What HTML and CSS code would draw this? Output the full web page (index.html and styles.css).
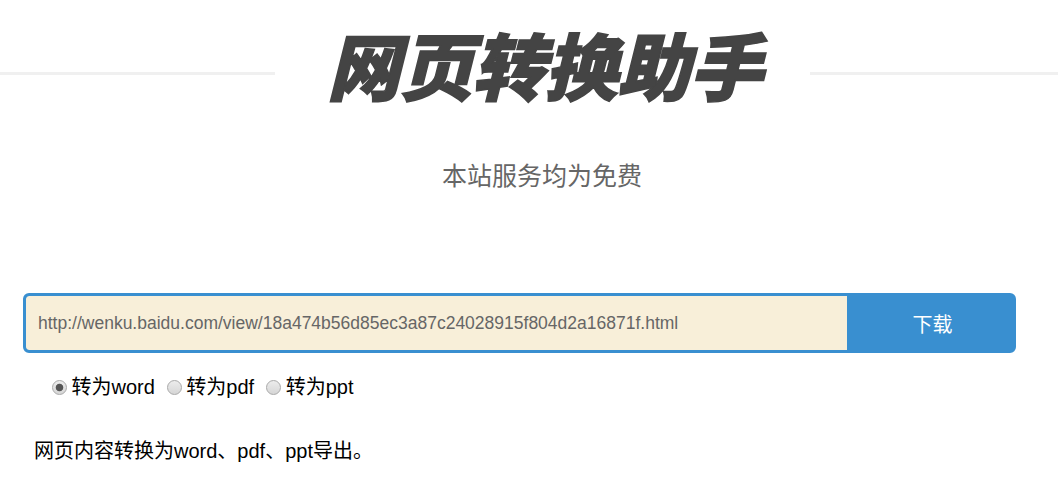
FILE: index.html
```html
<!DOCTYPE html>
<html lang="zh-CN">
<head>
<meta charset="utf-8">
<title>网页转换助手</title>
<link rel="stylesheet" href="styles.css">
</head>
<body>
<header class="masthead">
  <span class="rule rule-left"></span>
  <h1 class="title">网页转换助手</h1>
  <span class="rule rule-right"></span>
</header>
<p class="subtitle">本站服务均为免费</p>
<form class="download">
  <input class="url" type="text" value="http://wenku.baidu.com/view/18a474b56d85ec3a87c24028915f804d2a16871f.html">
  <button class="submit" type="button">下载</button>
</form>
<div class="formats">
  <label class="format"><input class="radio" type="radio" name="fmt" checked>转为word</label>
  <label class="format"><input class="radio" type="radio" name="fmt">转为pdf</label>
  <label class="format"><input class="radio" type="radio" name="fmt">转为ppt</label>
</div>
<p class="note">网页内容转换为word、pdf、ppt导出。</p>
</body>
</html>
```
FILE: styles.css
```css
* { box-sizing: border-box; }
html, body { margin: 0; padding: 0; }
body {
  width: 1058px;
  height: 484px;
  overflow: hidden;
  background: #fff;
  color: #000;
  font-family: "Liberation Sans", "Noto Sans CJK SC", sans-serif;
}
.masthead {
  display: flex;
  align-items: flex-start;
  height: 147px;
}
.rule {
  height: 3px;
  margin-top: 72px;
  background: #f0f0f0;
}
.rule-left { width: 275px; }
.rule-right { flex: 1; }
.title {
  width: 535px;
  margin: 0;
  padding: 20px 0 0 4px;
  text-align: center;
  font-size: 73px;
  line-height: 100px;
  font-weight: 900;
  font-style: italic;
  letter-spacing: -0.5px;
  -webkit-text-stroke: 1.5px #444;
  color: #444;
  white-space: nowrap;
}
.subtitle {
  margin: 0;
  padding-left: 442px;
  height: 146px;
  padding-top: 12px;
  font-size: 25px;
  line-height: 34px;
  color: #666;
}
.download {
  display: flex;
  width: 993px;
  height: 60px;
  margin-left: 23px;
  border: 3px solid #398fd0;
  border-radius: 6px;
  background: #398fd0;
  overflow: hidden;
}
.url {
  width: 821px;
  height: 54px;
  padding: 0 12px;
  border: 0;
  outline: 0;
  border-radius: 3px 0 0 3px;
  background: #f8efd9;
  color: #666;
  font: 17.5px "Liberation Sans", "Noto Sans CJK SC", sans-serif;
}
.submit {
  flex: 1;
  border: 0;
  padding: 0 0 0 5px;
  background: transparent;
  color: #fff;
  font: 20px "Liberation Sans", "Noto Sans CJK SC", sans-serif;
}
.formats {
  display: flex;
  gap: 12px;
  margin-top: 20px;
  padding-left: 52px;
  font-size: 20px;
  line-height: 28px;
  height: 28px;
}
.format {
  display: flex;
  align-items: center;
  gap: 4.5px;
}
.radio {
  appearance: none;
  -webkit-appearance: none;
  width: 15px;
  height: 15px;
  margin: 0;
  border: 1px solid #a9a9a9;
  border-radius: 50%;
  background: linear-gradient(#ececec, #d6d6d6);
}
.radio:checked {
  background: radial-gradient(circle, #555 0 3.4px, transparent 4.2px), linear-gradient(#ececec, #d6d6d6);
}
.note {
  margin: 0;
  padding: 36px 0 0 34px;
  font-size: 20px;
  line-height: 28px;
}
```
